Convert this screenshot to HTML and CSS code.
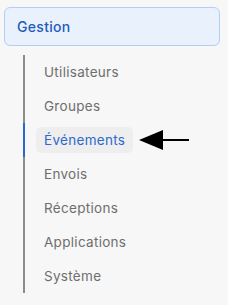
FILE: index.html
```html
<!DOCTYPE html>
<html lang="fr">
<head>
    <meta charset="UTF-8">
    <meta name="viewport" content="width=device-width, initial-scale=1.0">
    <title>Gestion</title>
    <link rel="stylesheet" href="styles.css">
</head>
<body>

<nav class="sidebar">
    <div class="group-head">Gestion</div>
    <ul class="sub-list">
        <li class="slot"><span class="item">Utilisateurs</span></li>
        <li class="slot"><span class="item">Groupes</span></li>
        <li class="slot active">
            <span class="item">Événements</span>
            <svg class="pointer" width="52" height="22" viewBox="0 0 52 22">
                <polygon points="1,11 25,1 25,21" fill="#000"/>
                <line x1="24" y1="11" x2="51" y2="11" stroke="#000" stroke-width="2"/>
            </svg>
        </li>
        <li class="slot"><span class="item">Envois</span></li>
        <li class="slot"><span class="item">Réceptions</span></li>
        <li class="slot"><span class="item">Applications</span></li>
        <li class="slot"><span class="item">Système</span></li>
    </ul>
</nav>

</body>
</html>
```

FILE: styles.css
```css
body {
    font-family: Inter, "Noto Sans", sans-serif;
    margin: 0;
    padding: 0;
    background-color: #f7f7f7;
}
.sidebar {
    padding: 7px 8px 0 4px;
}
.group-head {
    height: 37px;
    line-height: 37px;
    border: 1px solid #b5cdf3;
    border-radius: 6px;
    background-color: #e9f1fd;
    padding-left: 12px;
    font-size: 14px;
    font-weight: 500;
    letter-spacing: 0.3px;
    color: #1f5cb8;
}
.sub-list {
    list-style: none;
    margin: 9px 0 0 19px;
    padding: 0;
}
.slot {
    display: flex;
    align-items: center;
    padding: 4px 0 4px 11px;
    border-left: 2px solid #8c8c8c;
}
.item {
    display: inline-block;
    height: 26px;
    line-height: 26px;
    padding: 0 8px;
    border-radius: 5px;
    font-size: 13.5px;
    letter-spacing: 0.3px;
    color: #6e6e6e;
}
.slot.active {
    border-left-color: #2a66cc;
}
.slot.active .item {
    background-color: #eeeeee;
    color: #2e69cc;
}
.pointer {
    margin-left: 5px;
}
```
